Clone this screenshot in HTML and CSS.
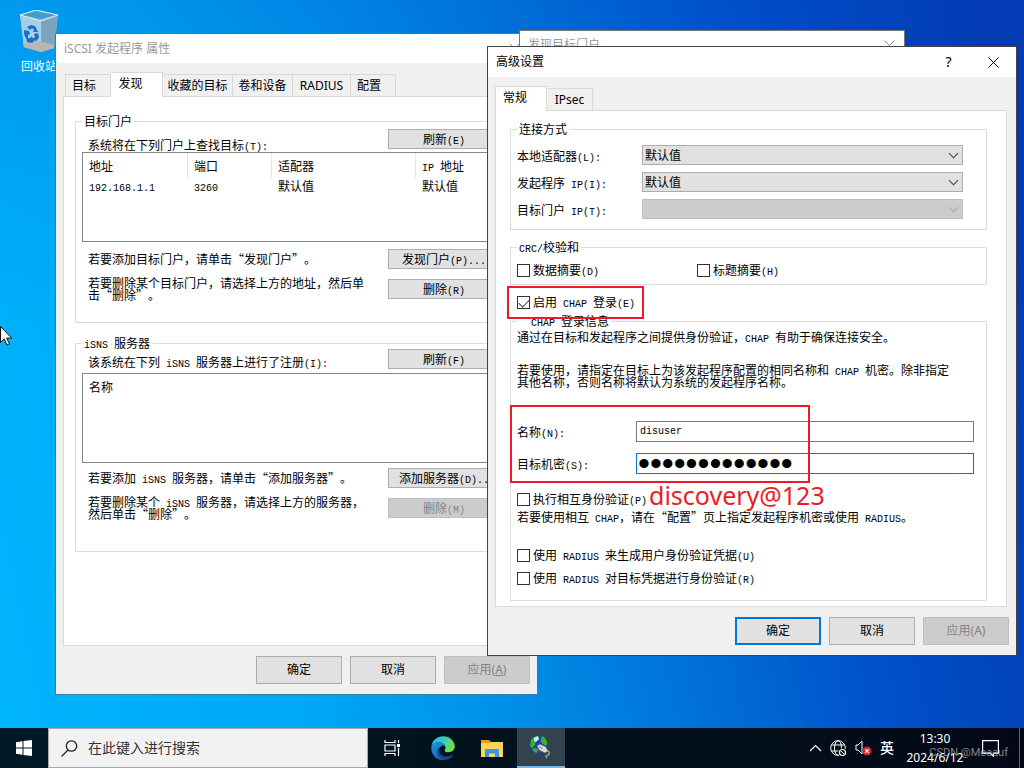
FILE: index.html
```html
<!DOCTYPE html>
<html lang="zh-CN">
<head>
<meta charset="utf-8">
<title>iSCSI 发起程序</title>
<link rel="stylesheet" href="styles.css">
</head>
<body>
<main class="desktop">
  <div class="recycle">
    <svg width="40" height="46" viewBox="0 0 40 46">
      <path d="M1 5 L17 0 L39 5 L35 38 L22 42 L5 37Z" fill="#8fb8cf"/>
      <path d="M1 5 L22 11 L22 42 L5 37Z" fill="#a5cfe3"/>
      <path d="M22 11 L39 5 L35 38 L22 42Z" fill="#7ba5be"/>
      <path d="M4 34 L17 30 L35 35 L35 38 L22 42 L5 37Z" fill="#b9b6b4"/>
      <path d="M3 5 L17 1 L37 5 L22 9Z" fill="#3f9fc8"/>
      <path d="M1 5 L17 0 L39 5 L22 11Z" fill="none" stroke="#d9eef6"/>
      <g fill="#1272cf"><path d="M8 17l4-2 4 1 2 4 1 2-5 0 1-2-2-2-2 2z"/><path d="M5 20l5 1 1 3-2 1 0 4 -3-2-1-4z"/><path d="M7 28l5 0 0-2 4 4-3 3-5-1z"/><path d="M15 24l4-1 1 5-3 3-3-2 2-2z"/></g>
    </svg>
    <span>回收站</span>
  </div>

  <section class="window win-props inactive">
    <header class="titlebar"><span>iSCSI 发起程序 属性</span>
      <button class="caption" aria-label="关闭"><svg width="11" height="11" viewBox="0 0 11 11"><path d="M.5.5l10 10M10.5.5l-10 10" stroke="#999" fill="none"/></svg></button>
    </header>
    <nav class="tabs">
      <button class="tab t-a">目标</button><button class="tab t-b active">发现</button><button class="tab t-c">收藏的目标</button><button class="tab t-d">卷和设备</button><button class="tab t-e">RADIUS</button><button class="tab t-f">配置</button>
    </nav>
    <div class="panel props-panel">
      <fieldset class="group portals">
        <legend>目标门户</legend>
        <div class="head"><span class="lead">系统将在下列门户上查找目标<i>(T):</i></span><button class="btn small">刷新<i>(E)</i></button></div>
        <div class="list">
          <table>
            <thead><tr><th class="c1">地址</th><th class="c2">端口</th><th class="c3">适配器</th><th><i>IP </i>地址</th></tr></thead>
            <tbody><tr><td><i>192.168.1.1</i></td><td><i>3260</i></td><td>默认值</td><td>默认值</td></tr></tbody>
          </table>
        </div>
        <div class="row"><p>若要添加目标门户，请单击“发现门户”。</p><button class="btn small">发现门户<i>(P)...</i></button></div>
        <div class="row"><p>若要删除某个目标门户，请选择上方的地址，然后单<br>击“删除”。</p><button class="btn small">删除<i>(R)</i></button></div>
      </fieldset>
      <fieldset class="group isns">
        <legend><i>iSNS </i>服务器</legend>
        <div class="head"><span class="lead">该系统在下列<i> iSNS </i>服务器上进行了注册<i>(I):</i></span><button class="btn small">刷新<i>(F)</i></button></div>
        <div class="list">
          <table><thead><tr><th>名称</th></tr></thead></table>
        </div>
        <div class="row"><p>若要添加<i> iSNS </i>服务器，请单击“添加服务器”。</p><button class="btn small">添加服务器<i>(D)..</i></button></div>
        <div class="row"><p>若要删除某个<i> iSNS </i>服务器，请选择上方的服务器，<br>然后单击“删除”。</p><button class="btn small" disabled>删除<i>(M)</i></button></div>
      </fieldset>
    </div>
    <footer class="actions"><button class="btn">确定</button><button class="btn">取消</button><button class="btn" disabled>应用(<u>A</u>)</button></footer>
  </section>

  <section class="window win-find inactive">
    <header class="titlebar"><span>发现目标门户</span>
      <button class="caption" aria-label="关闭"><svg width="11" height="11" viewBox="0 0 11 11"><path d="M.5.5l10 10M10.5.5l-10 10" stroke="#888" fill="none"/></svg></button>
    </header>
  </section>

  <section class="window win-adv">
    <header class="titlebar"><span>高级设置</span>
      <button class="caption help" aria-label="帮助">?</button>
      <button class="caption" aria-label="关闭"><svg width="11" height="11" viewBox="0 0 11 11"><path d="M.5.5l10 10M10.5.5l-10 10" stroke="#000" fill="none"/></svg></button>
    </header>
    <nav class="tabs"><button class="tab t-b active">常规</button><button class="tab t-a">IPsec</button></nav>
    <div class="panel adv-panel">
      <fieldset class="group connect">
        <legend>连接方式</legend>
        <div class="pick"><label for="adapter">本地适配器<i>(L):</i></label><span class="select"><select id="adapter"><option>默认值</option></select></span></div>
        <div class="pick"><label for="initip">发起程序<i> IP(I):</i></label><span class="select"><select id="initip"><option>默认值</option></select></span></div>
        <div class="pick"><label for="portalip">目标门户<i> IP(T):</i></label><span class="select off"><select id="portalip" disabled><option></option></select></span></div>
      </fieldset>
      <fieldset class="group crc">
        <legend><i>CRC/</i>校验和</legend>
        <label class="check"><input type="checkbox"><span>数据摘要<i>(D)</i></span></label>
        <label class="check"><input type="checkbox"><span>标题摘要<i>(H)</i></span></label>
      </fieldset>
      <label class="check enable"><input type="checkbox" checked><span>启用<i> CHAP </i>登录<i>(E)</i></span></label>
      <fieldset class="group chap">
        <legend><i>CHAP </i>登录信息</legend>
        <p>通过在目标和发起程序之间提供身份验证，<i>CHAP </i>有助于确保连接安全。</p>
        <p class="note">若要使用，请指定在目标上为该发起程序配置的相同名称和<i> CHAP </i>机密。除非指定<br>其他名称，否则名称将默认为系统的发起程序名称。</p>
        <div class="field"><label for="name">名称<i>(N):</i></label><input class="box" id="name" type="text" value="disuser"></div>
        <div class="field"><label for="secret">目标机密<i>(S):</i></label><input class="box focus" id="secret" type="password" value="discovery@123"></div>
        <label class="check mutual"><input type="checkbox"><span>执行相互身份验证<i>(P)</i></span></label>
        <p>若要使用相互<i> CHAP</i>，请在“配置”页上指定发起程序机密或使用<i> RADIUS</i>。</p>
        <label class="check gen"><input type="checkbox"><span>使用<i> RADIUS </i>来生成用户身份验证凭据<i>(U)</i></span></label>
        <label class="check"><input type="checkbox"><span>使用<i> RADIUS </i>对目标凭据进行身份验证<i>(R)</i></span></label>
      </fieldset>
    </div>
    <footer class="actions"><button class="btn default">确定</button><button class="btn">取消</button><button class="btn" disabled>应用(A)</button></footer>
    <div class="mark mark-chap"></div>
    <div class="mark mark-login"></div>
    <div class="hint">discovery@123</div>
  </section>

  <svg class="cursor" width="12" height="20" viewBox="0 0 12 20"><path d="M.5 .5v16l3.7-3.6 2.8 6 2.4-1.1-2.7-5.7h5z" fill="#fff" stroke="#111"/></svg>
</main>

<footer class="taskbar">
  <button class="task start" aria-label="开始"><svg width="16" height="16" viewBox="0 0 16 16" fill="#fff"><path d="M0 2.2L6.5 1.300V7.500H0zM7.500 1.100L16 0V7.500H7.500zM0 8.500H6.500V14.700L0 13.800zM7.500 8.500H16V16L7.500 14.900z"/></svg></button>
  <label class="search">
    <svg width="17" height="17" viewBox="0 0 17 17" fill="none" stroke="#222" stroke-width="1.3"><circle cx="10.500" cy="6" r="5.200"/><path d="M7 10L.5 16.500"/></svg>
    <input type="text" placeholder="在此键入进行搜索" aria-label="搜索">
  </label>
  <button class="task view" aria-label="任务视图"><svg width="17" height="16" viewBox="0 0 17 16" fill="none" stroke="#fff" stroke-width="1.2"><path d="M1 0v2.500h10V0M1 16v-2.500h10V16M1 5h10v6H1zM14.500 0v3M14.500 8v8"/><path d="M13 4h3v3h-3z" fill="#fff" stroke="none"/></svg></button>
  <button class="task" aria-label="Edge"><svg width="24" height="24" viewBox="0 0 24 24">
    <defs><linearGradient id="ea" x1="0" y1="0" x2="1" y2=".4"><stop offset="0" stop-color="#2bb4ea"/><stop offset=".5" stop-color="#35c9c0"/><stop offset="1" stop-color="#6fe04b"/></linearGradient><linearGradient id="eb" x1="0" y1="0" x2=".6" y2="1"><stop offset="0" stop-color="#1a9be4"/><stop offset="1" stop-color="#0c62c2"/></linearGradient></defs>
    <path d="M.4 10C1.500 4 6.500.2 12 .2c7 0 11.800 5 11.800 10.300 0 3.500-2.800 5.700-6 5.700-3 0-4.300-1-4.300-1.800 0-.7 1-1.100 1-3C14.500 8.500 11 6.200 7.500 6.200 4 6.200 1.500 8 .4 10z" fill="url(#ea)"/>
    <path d="M.3 11C1 8 4 6.200 7.500 6.200c3.500 0 6.500 2 7 4.600-1-1.200-2.500-1.400-3.500-1-2.500 1-3.200 3.500-3 6 .3 4 3.500 7 7 7.500C7 26 0 20 .3 11z" fill="url(#eb)"/>
    <path d="M9.500 10.500c-2 2-1.700 5-.3 7.200 2.600 3.400 8 3.800 12.400.8.500-.3.900.1.600.6-2 3.200-5.400 4.800-8.700 4.700-4.500-.8-7.500-4-7.500-8 0-2.500 1.500-4.500 3.500-5.300z" fill="#114a94"/>
  </svg></button>
  <button class="task" aria-label="文件资源管理器"><svg width="22" height="19" viewBox="0 0 22 19"><path d="M0 1h8l2 2h11v15H0z" fill="#e3a008"/><path d="M0 4h9l1-1h12v15H0z" fill="#fed25f"/><path d="M4 18v-7l1-1h12l1 1v7h-4v-3.500H8V18z" fill="#3f95dd"/></svg></button>
  <button class="task running" aria-label="iSCSI"><svg width="24" height="24" viewBox="0 0 24 24">
    <circle cx="9.500" cy="9.500" r="9" fill="#1b3fae"/><path d="M2 5c2-3 4-4 7-4l1 3-3 2-1 4-3 3-2-2zM13 1c3 1 5 4 5.500 8l-2 2-4-3-1-3zM3 14l4-1 2 2-1 3c-2 0-4-2-5-4z" fill="#3fae2c"/><path d="M5 3l4-2 1 3-3 3-2-1z" fill="#b8f3f5"/><path d="M8 11l3-2 6 3 2 4-3 2-6-3z" fill="#dcdcdc" stroke="#666" stroke-width=".7"/><path d="M10 13l2-1.500M12 14l2-1.500" stroke="#666" stroke-width=".8"/><path d="M18 16c3 0 3 3 1 4s-3 1-1 3" fill="none" stroke="#9aa3a8" stroke-width="1.400"/></svg></button>
  <div class="tray">
    <svg width="13" height="8" viewBox="0 0 13 8"><path d="M1 7l5.500-5.500L12 7" fill="none" stroke="#fff" stroke-width="1.200"/></svg>
    <svg width="17" height="17" viewBox="0 0 17 17" fill="none" stroke="#fff"><circle cx="8" cy="8" r="7.300"/><ellipse cx="8" cy="8" rx="3.500" ry="7.300"/><path d="M1.500 5h13M1.500 11h8"/><circle cx="12.500" cy="12.500" r="4" fill="#020a14" stroke="#020a14"/><circle cx="12.500" cy="12.500" r="3" stroke-width="1.200"/><path d="M10.500 10.500l4 4"/></svg>
    <svg width="17" height="16" viewBox="0 0 17 16"><path d="M1 5h2l4-4v13L3 10H1z" fill="none" stroke="#fff"/><circle cx="12" cy="11" r="4.500" fill="#e01f2c"/><path d="M10.200 9.200l3.600 3.600M13.800 9.200l-3.600 3.600" stroke="#fff" stroke-width="1.200"/></svg>
    <span class="ime">英</span>
    <div class="clock">13:30<br>2024/6/12</div>
    <svg class="notice" width="17" height="17" viewBox="0 0 17 17"><path d="M.6.6h15.800v12.500h-5v3l-3-3H.6z" fill="none" stroke="#fff" stroke-width="1.200"/></svg>
    <span class="peek"></span>
    <span class="watermark">CSDN @Meaauf</span>
  </div>
</footer>
</body>
</html>
```
FILE: styles.css
```css
* { box-sizing: border-box; }
html, body { height: 100%; margin: 0; }
body {
  display: flex;
  flex-direction: column;
  overflow: hidden;
  background: #0078d7;
  color: #000;
  font-family: "Noto Sans", "Noto Sans CJK SC", sans-serif;
  font-size: 12px;
  line-height: 16px;
  text-spacing-trim: space-all;
}
button, input, select { font: inherit; color: inherit; margin: 0; }
p { margin: 0; }
i {
  font: 10px/1px "Liberation Mono", monospace;
  white-space: pre;
}

.desktop {
  position: relative;
  flex: 1;
  overflow: hidden;
  background:
    linear-gradient(rgba(0, 70, 200, .2), transparent 45%),
    linear-gradient(78deg, #00b4fc 0%, #00a9f6 25%, #0092ea 42%, #0074da 58%, #0050c8 76%, #0339b0 96%);
}
.recycle {
  position: absolute;
  left: 9px;
  top: 10px;
  width: 60px;
  display: flex;
  flex-direction: column;
  align-items: center;
  gap: 3px;
  color: #fff;
}
.cursor { position: absolute; left: 0; top: 326px; }

.window {
  position: absolute;
  display: flex;
  flex-direction: column;
  background: #f0f0f0;
  border: 1px solid #555;
}
.win-props { left: 55px; top: 33px; width: 483px; border-color: #2f7fa8; }
.win-find { left: 519px; top: 30px; width: 386px; height: 200px; border-color: #777; }
.win-adv { left: 487px; top: 46px; width: 530px; border-color: #444; }

.titlebar {
  display: flex;
  align-items: center;
  height: 30px;
  padding-left: 8px;
  background: #fff;
}
.titlebar span { flex: 1; }
.inactive .titlebar { color: #999; }
.caption {
  width: 45px;
  height: 30px;
  padding: 0;
  border: 0;
  background: none;
  display: flex;
  align-items: center;
  justify-content: center;
}
.help { font-size: 14px; }
.win-props .titlebar { height: 29px; }
.win-find .caption { width: 30px; }
.win-find .titlebar { height: 28px; }

.tabs { display: flex; align-items: flex-end; height: 24px; margin: 9px 9px 0; }
.tab {
  height: 22px;
  padding: 0;
  border: 1px solid #d9d9d9;
  border-bottom: 0;
  border-left-width: 0;
  background: #f0f0f0;
  text-align: center;
}
.tab:first-child { border-left-width: 1px; }
.tab.active {
  height: 25px;
  margin-bottom: -1px;
  padding: 0 12px 3px 0;
  background: #fff;
  z-index: 1;
}
.t-a { width: 46px; padding-right: 8px; }
.t-b { width: 52px; }
.t-c { width: 70px; }
.t-d { width: 60px; }
.t-e { width: 58px; }
.t-f { width: 45px; padding-right: 8px; }
.win-adv .tabs { margin-left: 7px; }
.win-adv .t-a { padding-right: 0; }

.panel {
  margin: 0 8px 0 7px;
  border: 1px solid #d9d9d9;
  background: #fff;
  font-family: "Noto Sans CJK SC", sans-serif;
  line-height: 12px;
}
.props-panel { height: 550px; padding: 16px 11px; }
.adv-panel { height: 497px; padding: 10px 19px 0 14px; margin-right: 9px; }

.group {
  min-width: 0;
  margin: 0;
  padding: 0 6px;
  border: 1px solid #dcdcdc;
}
.group legend { height: 16px; padding: 0 2px; line-height: 16px; }
.portals { height: 210px; }
.isns { height: 217px; margin-top: 12px; }
.head { display: flex; justify-content: space-between; height: 23px; padding-right: 10px; }
.lead { align-self: flex-end; padding-left: 6px; line-height: 14px; }
.isns .head { height: 22px; }
.isns .head .small { margin-top: -2px; }
.isns .lead { padding-bottom: 4px; }
.list { height: 90px; border: 1px solid #828790; background: #fff; }
.list table { width: 100%; border-collapse: collapse; table-layout: fixed; }
.list th, .list td { padding: 0 0 0 6px; text-align: left; font-weight: 400; }
.list th { height: 26px; box-shadow: inset -1px 0 #e5e5e5; }
.list th:last-child { box-shadow: none; }
.list td { height: 14px; }
.c1 { width: 105px; }
.c2 { width: 84px; }
.c3 { width: 144px; }
.row {
  display: flex;
  align-items: center;
  justify-content: space-between;
  height: 20px;
  margin-top: 7px;
  padding: 0 10px 0 6px;
}
.row + .row { margin-top: 10px; }
.isns .row { margin-top: 5px; }
.isns .row + .row { margin-top: 10px; }
.row p { white-space: nowrap; }

.btn {
  width: 86px;
  height: 28px;
  padding: 0;
  border: 1px solid #adadad;
  background: #e1e1e1;
  white-space: nowrap;
}
.btn.small { width: 112px; height: 20px; line-height: 14px; }
.btn:disabled { background: #ccc; border-color: #bfbfbf; color: #838383; }
.btn.default { border: 2px solid #0078d7; }
.actions { display: flex; justify-content: flex-end; gap: 8px; padding: 10px 7px; }

.pick { display: flex; align-items: center; height: 27px; }
.pick label { width: 125px; padding-top: 2px; }
.select { position: relative; width: 321px; height: 20px; }
.select select {
  display: block;
  width: 100%;
  height: 20px;
  padding: 0 2px;
  border: 1px solid #adadad;
  border-radius: 0;
  background: #e1e1e1;
  appearance: none;
  line-height: 16px;
}
.select::after {
  content: "";
  position: absolute;
  right: 6px;
  top: 5px;
  width: 6px;
  height: 6px;
  border: solid #444;
  border-width: 0 1px 1px 0;
  transform: rotate(45deg);
}
.off select { background: #ccc; border-color: #bfbfbf; opacity: 1; }
.off::after { border-color: #aaa; }
.connect { height: 109px; }
.connect legend { margin-bottom: 4px; }

.crc { display: flex; height: 46px; margin-top: 9px; padding-top: 8px; }
.crc .check { width: 180px; }
.check { display: flex; align-items: center; height: 14px; white-space: pre; }
.check input {
  width: 13px;
  height: 13px;
  margin-right: 3px;
  border: 1px solid #333;
  background: #fff;
  appearance: none;
}
.check input:checked::after {
  content: "";
  display: block;
  width: 9px;
  height: 5px;
  margin: 2px 1px;
  border: solid #444;
  border-width: 0 0 1px 1px;
  transform: rotate(-45deg);
}
.enable { margin: 10px 0 4px 7px; }

.chap { height: 288px; }
.chap legend { padding-left: 14px; }
.chap p { white-space: nowrap; }
.chap legend + p { margin-top: 2px; }
.note { padding: 21px 0 33px; }
.field { display: flex; align-items: center; height: 21px; margin-bottom: 11px; padding-right: 6px; }
.field label { width: 119px; }
.box {
  flex: 1;
  min-width: 0;
  height: 21px;
  padding: 0 3px;
  border: 1px solid #7a7a7a;
  border-radius: 0;
  background: #fff;
  outline: 0;
  font: 10px/16px "Liberation Mono", monospace;
}
.box.focus { padding: 0 1px; border-color: #0078d7; font: 34px/19px "Liberation Sans", sans-serif; }
.mutual { margin: 18px 0 5px; }
.gen { margin: 25px 0 9px; }

.mark { position: absolute; border: 2px solid #ed1c24; }
.mark-chap { left: 19px; top: 239px; width: 137px; height: 33px; }
.mark-login { left: 22px; top: 358px; width: 300px; height: 78px; }
.hint {
  position: absolute;
  left: 161px;
  top: 432px;
  color: #ed1c24;
  font-size: 25px;
  line-height: 32px;
}

.taskbar {
  display: flex;
  height: 40px;
  background: linear-gradient(90deg, #001a27, #02101c 60%, #020817);
  color: #fff;
}
.task {
  width: 48px;
  margin-right: 1px;
  padding: 0;
  border: 0;
  background: none;
  display: flex;
  align-items: center;
  justify-content: center;
}
.start { margin-right: 0; }
.view { padding-right: 4px; }
.running { background: #32434f; border-bottom: 2px solid #76b9ed; }
.search {
  display: flex;
  align-items: center;
  gap: 10px;
  width: 320px;
  margin-right: 2px;
  padding: 0 12px;
  border: 1px solid #a8a8a8;
  background: #f2f2f2;
}
.search input { flex: 1; min-width: 0; border: 0; padding: 0; background: none; font-size: 14px; outline: 0; }
.search input::placeholder { color: #333; opacity: 1; }
.tray { position: relative; display: flex; align-items: center; gap: 8px; margin-left: auto; }
.ime { font-size: 14px; font-weight: 500; }
.clock { width: 66px; text-align: center; line-height: 19px; }
.notice { margin-left: 6px; }
.peek { width: 5px; height: 40px; margin-left: 12px; border-left: 1px solid #566; }
.watermark {
  position: absolute;
  right: 16px;
  top: 17px;
  color: rgba(190, 190, 190, .7);
  font-family: Roboto, sans-serif;
  font-size: 11px;
}
```
